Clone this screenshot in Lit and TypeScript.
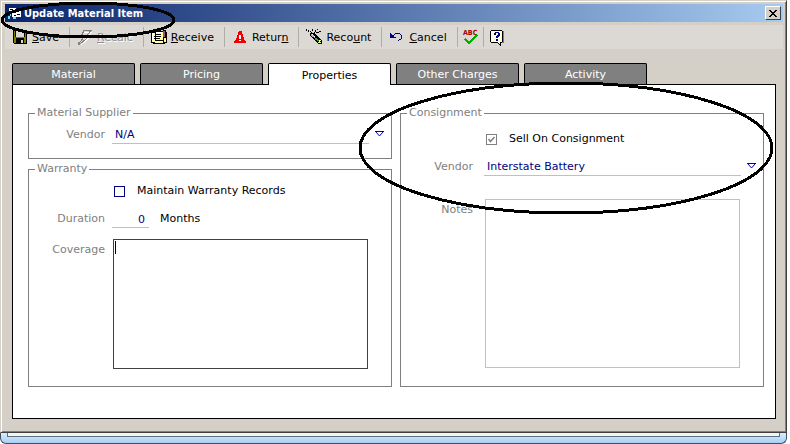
import { LitElement, html, svg, css, nothing } from "lit";
import type { TemplateResult, SVGTemplateResult } from "lit";
import { customElement, property, state } from "lit/decorators.js";
import { classMap } from "lit/directives/class-map.js";

const icons: Record<string, SVGTemplateResult> = {
  save: svg`
    <path fill="#000" d="M1 1h14v14H2l-1-1z"/>
    <path fill="#808000" d="M2 2h1v12h-1zM13 4h1v10h-1zM3 8h10v1H3zM3 9h1v5h-1zM12 9h1v5h-1z"/>
    <path fill="#dcd8d3" d="M4 2h8v6H4zM13 2h1v1h-1zM9 11h2v3H9z"/>`,
  recalc: svg`
    <path fill="none" stroke="#fff" d="M6 3h9L9 9h3L4 16"/>
    <path fill="none" stroke="#808080" d="M7 1.500h7L9 7.500h3L3 15M7 1.500L3.500 8.500h3L2.500 14"/>
    <path fill="#808080" d="M1 13h2v3H1z"/>`,
  receive: svg`
    <path fill="#000" d="M0 3h4V2h8V1h3v2h1v11h-2v1H2v-1H0z"/>
    <path fill="#ffff9c" d="M1 4h3v9H1zM5 3h7v8H5zM4 12h8v2H4z"/>
    <path fill="#fff" d="M1 4h1v7H1zM5 3h6v1H5z"/>
    <path fill="#000" d="M4 5h6v1H4zM3 7h7v1H3zM3 9h6v1H3z"/>
    <path fill="#ffff9c" d="M13 9h2v4h-2z"/>
    <path fill="#a05080" d="M12 2h2v6h-2z"/>`,
  return: svg`
    <path fill="#f00000" d="M7 2h2l1 1v2l1 1v2l1 1v1l2 3v1H2v-1l2-3V9l1-1V6l1-1V3z"/>
    <path fill="#fff" d="M7 6h2v4H7zM7 11h2v1H7z"/>`,
  recount: svg`
    <path fill="#000" d="M0 0h1v2H0zM2 1h1v2H2zM4 2h1v1H4zM6 0h1v2H6zM5 3h1v1H5zM9 1h1v2H9zM11 0h1v1h-1zM8 3h1v1H8zM10 3h3v1h-3zM13 2h2v1h-2z"/>
    <path fill="#000" d="M4 4h4l2 2 2 2 2 1 2 3v3h-3l-3-2-3-3-3-3z"/>
    <path fill="#c8a0d0" d="M5 5h2v1h1v1h1v2H8V8H6V7H5z"/>
    <path fill="#fff" d="M6 5h1v1H6zM8 7h1v1H8z"/>
    <path fill="#40a040" d="M9 9h2v1h1v1h1v1h-2v-1H9z"/>
    <path fill="#ffff80" d="M13 11h2v1h-2zM12 13h1v-1h1v1h1v1h-3z"/>`,
  cancel: svg`
    <path fill="#000080" d="M1 4h1v1h1v1h1v1h1v1h2v1H1z"/>
    <path fill="none" stroke="#000080" stroke-width="1" d="M3 7.500L6.500 4.500h4l2 2v3l-3 2"/>`,
  help: svg`
    <path fill="#808080" d="M3 2h12v12H3z"/>
    <path fill="#ffffe0" stroke="#000" d="M1.500 2.500l1-1h10l1 1v10l-1 1h-1v3l-3-3h-6l-1-1z"/>
    <path fill="#000080" d="M5 4h1V3h4v1h1v3h-1v1H9v1H7V7h1V6h1V4H7v2H5zM7 10h2v2H7z"/>`,
};

@customElement("tool-icon")
class ToolIcon extends LitElement {
  @property() name = "";
  static styles = css`
    :host { display: block; width: 16px; height: 16px; }
    svg { display: block; overflow: visible; }
    .abc { font: bold 7px "DejaVu Sans Condensed", "DejaVu Sans", sans-serif; fill: #a00000; }
  `;
  render() {
    return html`<svg width="16" height="16" viewBox="0 0 16 16" shape-rendering="crispEdges" aria-hidden="true">
      ${this.name === "spell"
        ? svg`<text class="abc" x="0" y="6">ABC</text>
            <path fill="none" stroke="#00b000" stroke-width="2" d="M2 10l4 4 8-8"/>`
        : icons[this.name]}
    </svg>`;
  }
}

interface Tool { icon: string; text?: string; key?: number; hint?: string; disabled?: boolean; }

const tools: Tool[] = [
  { icon: "save", text: "Save", key: 0 },
  { icon: "recalc", text: "Recalc", key: 0, disabled: true },
  { icon: "receive", text: "Receive", key: 0 },
  { icon: "return", text: "Return", key: 5 },
  { icon: "recount", text: "Recount", key: 4 },
  { icon: "cancel", text: "Cancel", key: 0 },
  { icon: "spell", hint: "Check spelling" },
  { icon: "help", hint: "Help" },
];

const tabs = ["Material", "Pricing", "Properties", "Other Charges", "Activity"];

@customElement("app-root")
class AppRoot extends LitElement {
  @state() private tab = "Properties";

  static styles = css`
    :host {
      display: block;
      font: 11px/14px "DejaVu Sans", Verdana, sans-serif;
      color: #000;
      background: #fff;
    }
    * { box-sizing: border-box; }
    button, input, select, textarea { font: inherit; color: inherit; margin: 0; border-radius: 0; }
    .page { position: relative; padding-right: 3px; }
    .window {
      background: #d4d0c8;
      border: 1px solid #d4d0c8;
      border-right-color: #404040;
      border-bottom: 1px solid #404040;
      box-shadow: inset 1px 1px #fff, inset -1px -1px #808080;
      padding: 3px 3px 13px 4px;
    }
    .title {
      display: flex;
      align-items: center;
      height: 18px;
      padding: 0 2px 0 3px;
      gap: 3px;
      background: linear-gradient(90deg, #0a246a, #a6caf0);
      color: #fff;
    }
    .title h1 {
      flex: 1;
      margin: 0;
      padding-top: 2px;
      font: bold 11px/16px "DejaVu Sans Condensed", "DejaVu Sans", sans-serif;
    }
    .close {
      display: grid;
      place-items: center;
      width: 16px;
      height: 14px;
      padding: 0;
      border: 1px solid;
      border-color: #fff #404040 #404040 #fff;
      background: #d4d0c8;
    }
    .toolbar {
      display: flex;
      align-items: center;
      height: 24px;
      margin-top: 3px;
      background: #dcd8d3;
    }
    .tool {
      display: flex;
      align-items: center;
      gap: 4px;
      height: 20px;
      padding: 0 10px 0 7px;
      border: 0;
      border-right: 1px solid #b0aca6;
      background: none;
    }
    .tool span { padding-top: 2px; }
    .tool.bare { padding: 0 4px 0 5px; }
    .tool:last-child { border-right: 0; }
    .tool:disabled { color: #909090; text-shadow: 1px 1px #fff; }
    .tabs {
      display: flex;
      gap: 5px;
      margin: 14px 7px 0;
    }
    .tab {
      flex: 0 1 123px;
      height: 21px;
      padding: 2px 0 0;
      border: 1px solid #000;
      border-bottom: 0;
      border-radius: 2px 2px 0 0;
      background: #808080;
      color: #fff;
    }
    .tab.on {
      height: 22px;
      margin-bottom: -1px;
      background: #fff;
      color: #000;
      z-index: 1;
    }
    .sheet {
      display: grid;
      grid-template-columns: 1fr 1fr;
      gap: 8px;
      margin: 0 7px;
      padding: 21px 11px 31px 15px;
      border: 1px solid #000;
      background: #fff;
    }
    .side { display: flex; flex-direction: column; gap: 3px; min-width: 0; }
    fieldset {
      min-width: 0;
      margin: 0;
      padding: 4px 0 14px;
      border: 1px solid #808080;
    }
    fieldset.tall { padding: 5px 0 17px; }
    fieldset.right { padding: 9px 0 18px; }
    legend { margin-left: 6px; padding: 0 2px; color: #808080; }
    .row {
      display: grid;
      grid-template-columns: 83px 1fr 22px;
      min-height: 20px;
      align-items: center;
    }
    .row + .row { margin-top: 7px; }
    .row + .row.area { align-items: start; margin-top: 11px; }
    .row + .row.notes { margin-top: 23px; }
    .label { padding: 2px 7px 0 0; text-align: right; color: #808080; }
    .right .label { padding-right: 11px; }
    .area .label { padding-top: 4px; }
    select, .num {
      height: 20px;
      border: 0;
      border-bottom: 1px solid #c0c0c0;
      background: none;
      color: #000080;
      outline: 0;
    }
    select { appearance: none; width: 100%; padding: 3px 3px 0; }
    .arrow { justify-self: start; margin-left: 6px; }
    .months { display: flex; align-items: center; gap: 11px; }
    .months span { padding-top: 2px; }
    .num { width: 37px; padding: 3px 4px 0; text-align: right; }
    .check { display: flex; align-items: center; gap: 12px; grid-column: 2 / 4; padding-left: 2px; }
    .box { position: relative; display: flex; }
    .box input {
      appearance: none;
      width: 11px;
      height: 11px;
      border: 1px solid #000080;
      background: #fff;
    }
    .box input:disabled { border-color: #808080; }
    .tick { position: absolute; inset: 0; pointer-events: none; visibility: hidden; }
    .box input:checked + .tick { visibility: visible; }
    textarea {
      display: block;
      height: 130px;
      margin: 0 1px;
      padding: 1px 2px;
      border: 1px solid #404040;
      background: #fff;
      resize: none;
      outline: 0;
    }
    .notes textarea { height: 169px; border-color: #c0c0c0; }
    .caretbox { position: relative; display: grid; }
    .caret { position: absolute; left: 3px; top: 2px; width: 1px; height: 13px; background: #000; }
    .frame {
      height: 11px;
      padding: 0 6px 6px;
      border: 1px solid #405060;
      border-top: 0;
      border-radius: 0 0 6px 6px;
      background: linear-gradient(#d8ecfc, #a8d0f4);
    }
    .inner { height: 4px; border: 1px solid #607080; border-top: 0; background: #f2f6f2; }
    .marks {
      position: absolute;
      left: 0;
      top: 0;
      pointer-events: none;
    }
  `;

  private tool(t: Tool): TemplateResult {
    const text = t.text ?? "";
    const k = t.key ?? 0;
    return html`<button
      class=${classMap({ tool: true, bare: !t.text })}
      ?disabled=${!!t.disabled}
      aria-label=${t.hint ?? text}
    ><tool-icon name=${t.icon}></tool-icon>${t.text
      ? html`<span>${text.slice(0, k)}<u>${text[k]}</u>${text.slice(k + 1)}</span>`
      : nothing}</button>`;
  }

  private arrow() {
    return html`<svg class="arrow" width="9" height="6" viewBox="0 0 9 6" aria-hidden="true">
      <path fill="none" stroke="#0000b0" d="M0 .5h9M1 1l3.500 4L8 1"/>
    </svg>`;
  }

  private check(text: string, checked = false) {
    return html`<label class="check"><span class="box"><input
      type="checkbox" ?checked=${checked} ?disabled=${checked}
    /><svg class="tick" width="11" height="11" viewBox="0 0 11 11" aria-hidden="true">
      <path fill="none" stroke="#808080" stroke-width="1.500" d="M2.500 5l2 2.500 4-4.500"/>
    </svg></span>${text}</label>`;
  }

  render() {
    return html`<div class="page">
      <main class="window">
        <header class="title">
          <svg width="13" height="14" viewBox="0 0 13 14" shape-rendering="crispEdges" aria-hidden="true">
            <path fill="#fff" d="M1 2h7v4H1zM4 5h9v6H4z"/>
            <path fill="#000" d="M2 3h3v1H2zM5 6h3v1H5zM9 8h3v1H9zM6 9h2v1H6zM9 2h3v2H9z"/>
            <path fill="#60e0f0" d="M0 10h2v3H0zM5 11h3v2H5zM2 8h1v2H2z"/>
          </svg>
          <h1>Update Material Item</h1>
          <button class="close" aria-label="Close">
            <svg width="8" height="7" viewBox="0 0 8 7" shape-rendering="crispEdges" aria-hidden="true">
              <path d="M0 0h2v1h1v1h2V1h1V0h2v1H7v1H6v1H5v1h1v1h1v1h1v1H6V6H5V5H3v1H2v1H0V6h1V5h1V4h1V3H2V2H1V1H0z"/>
            </svg>
          </button>
        </header>
        <div class="toolbar" role="toolbar">${tools.map((t) => this.tool(t))}</div>
        <nav class="tabs" role="tablist">
          ${tabs.map(
            (t) => html`<button
              role="tab"
              class=${classMap({ tab: true, on: t === this.tab })}
              aria-selected=${t === this.tab ? "true" : "false"}
              @click=${() => (this.tab = t)}
            >${t}</button>`
          )}
        </nav>
        <section class="sheet">
          <div class="side">
            <fieldset>
              <legend>Material Supplier</legend>
              <div class="row">
                <label class="label" for="supplier">Vendor</label>
                <select id="supplier"><option>N/A</option></select>
                ${this.arrow()}
              </div>
            </fieldset>
            <fieldset class="tall">
              <legend>Warranty</legend>
              <div class="row">${this.check("Maintain Warranty Records")}</div>
              <div class="row">
                <label class="label" for="duration">Duration</label>
                <div class="months"><input class="num" id="duration" type="text" value="0" /><span>Months</span></div>
              </div>
              <div class="row area">
                <label class="label" for="coverage">Coverage</label>
                <div class="caretbox"><textarea id="coverage"></textarea><span class="caret"></span></div>
              </div>
            </fieldset>
          </div>
          <fieldset class="right">
            <legend>Consignment</legend>
            <div class="row">${this.check("Sell On Consignment", true)}</div>
            <div class="row">
              <label class="label" for="vendor">Vendor</label>
              <select id="vendor"><option>Interstate Battery</option></select>
              ${this.arrow()}
            </div>
            <div class="row area notes">
              <label class="label" for="notes">Notes</label>
              <div class="caretbox"><textarea id="notes"></textarea></div>
            </div>
          </fieldset>
        </section>
      </main>
      <div class="frame"><div class="inner"></div></div>
      <svg class="marks" width="780" height="220" viewBox="0 0 780 220" shape-rendering="crispEdges" aria-hidden="true">
        <g fill="none" stroke="#000" stroke-width="3">
          <ellipse cx="88" cy="20" rx="86" ry="17"/>
          <ellipse cx="566" cy="148" rx="206" ry="65"/>
        </g>
      </svg>
    </div>`;
  }
}
